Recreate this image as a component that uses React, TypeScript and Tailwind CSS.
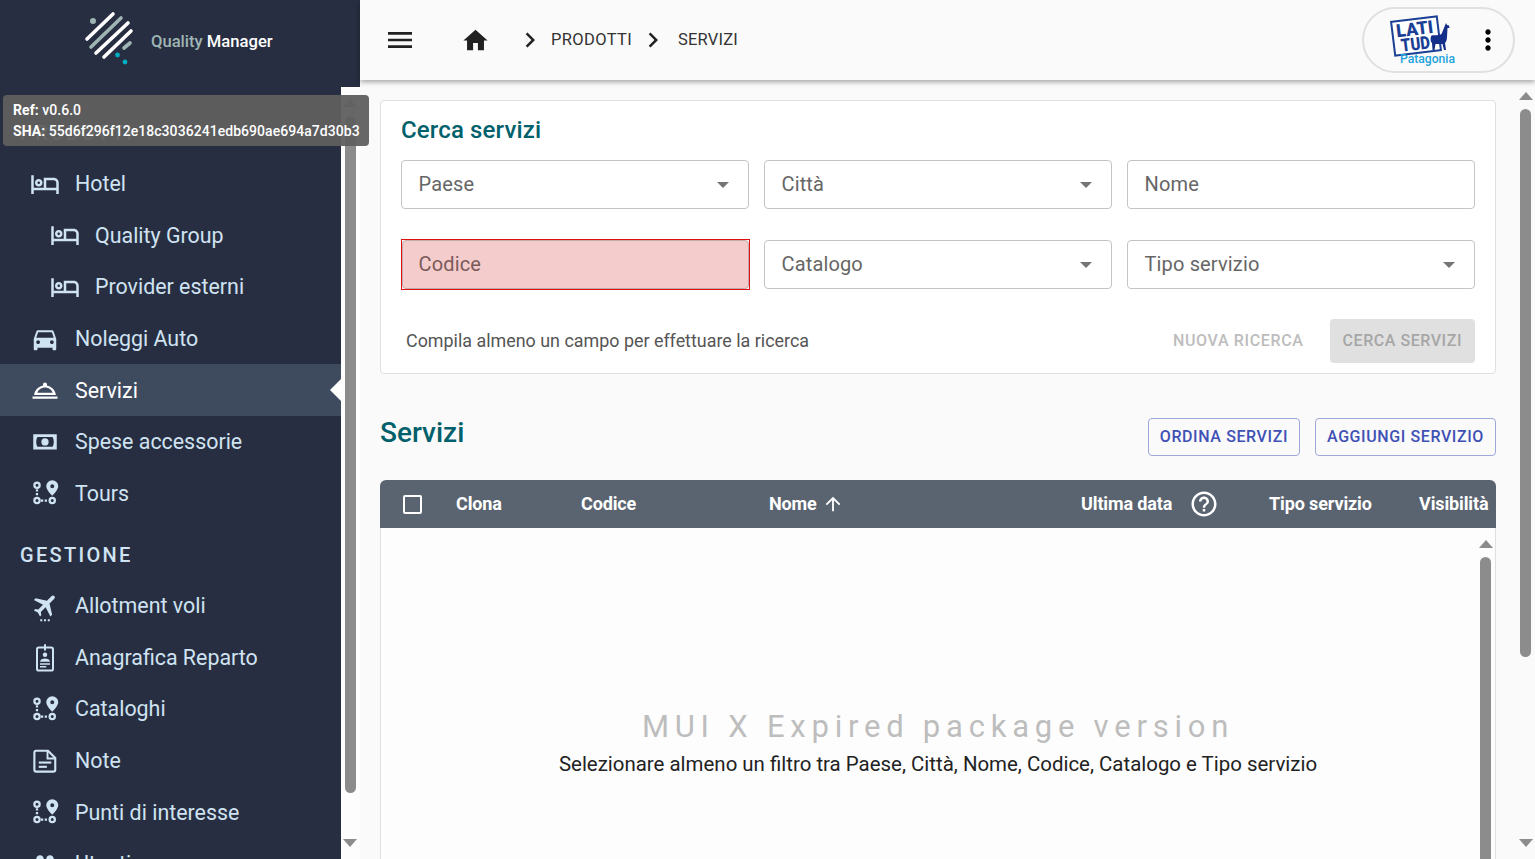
import type { ReactNode } from "react";

const ICON_PATHS = {
  menu: "M3 18h18v-2H3v2zm0-5h18v-2H3v2zm0-7v2h18V6H3z",
  home: "M10 20v-6h4v6h5v-8h3L12 3 2 12h3v8z",
  next: "M10 6 8.59 7.41 13.17 12l-4.58 4.59L10 18l6-6z",
  more: "M12 8c1.1 0 2-.9 2-2s-.9-2-2-2-2 .9-2 2 .9 2 2 2zm0 2c-1.1 0-2 .9-2 2s.9 2 2 2 2-.9 2-2-.9-2-2-2zm0 6c-1.1 0-2 .9-2 2s.9 2 2 2 2-.9 2-2-.9-2-2-2z",
  help: "M11 18h2v-2h-2v2zm1-16C6.48 2 2 6.48 2 12s4.48 10 10 10 10-4.48 10-10S17.52 2 12 2zm0 18c-4.41 0-8-3.59-8-8s3.59-8 8-8 8 3.59 8 8-3.59 8-8 8zm0-14c-2.21 0-4 1.79-4 4h2c0-1.1.9-2 2-2s2 .9 2 2c0 2-3 1.75-3 5h2c0-2.25 3-2.5 3-5 0-2.21-1.79-4-4-4z",
  arrowUp: "M4 12l1.41 1.41L11 7.83V20h2V7.83l5.58 5.59L20 12l-8-8-8 8z",
};

function Glyph({ d, size, className }: { d: string; size: number; className?: string }) {
  return (
    <svg viewBox="0 0 24 24" width={size} height={size} fill="currentColor" className={className}>
      <path d={d} />
    </svg>
  );
}

function Icon({ children }: { children: ReactNode }) {
  return (
    <svg viewBox="0 0 24 24" width={30} height={30} fill="currentColor" className="shrink-0 overflow-visible">
      {children}
    </svg>
  );
}

function HotelIcon() {
  return (
    <Icon>
      <path d="M7 14c1.66 0 3-1.34 3-3S8.66 8 7 8s-3 1.34-3 3 1.34 3 3 3zm0-4c.55 0 1 .45 1 1s-.45 1-1 1-1-.45-1-1 .45-1 1-1zm12-3h-8v8H3V5H1v15h2v-3h18v3h2v-9c0-2.21-1.79-4-4-4zm2 8h-8V9h6c1.1 0 2 .9 2 2v4z" />
    </Icon>
  );
}

function CarIcon() {
  return (
    <Icon>
      <path d="M18.92 6.01C18.72 5.42 18.16 5 17.5 5h-11c-.66 0-1.21.42-1.42 1.01L3 12v8c0 .55.45 1 1 1h1c.55 0 1-.45 1-1v-1h12v1c0 .55.45 1 1 1h1c.55 0 1-.45 1-1v-8l-2.08-5.99zM6.5 16c-.83 0-1.5-.67-1.5-1.5S5.67 13 6.5 13s1.5.67 1.5 1.5S7.33 16 6.5 16zm11 0c-.83 0-1.5-.67-1.5-1.5s.67-1.5 1.5-1.5 1.5.67 1.5 1.5-.67 1.5-1.5 1.5zM5 11l1.5-4.5h11L19 11H5z" />
    </Icon>
  );
}

function ServiceIcon() {
  return (
    <Icon>
      <path d="M2 17.2h20v1.8H2z" />
      <path
        fillRule="evenodd"
        d="M13.4 8.3c.1-.2.2-.5.2-.8 0-.9-.7-1.6-1.6-1.6s-1.6.7-1.6 1.6c0 .3.1.6.2.8C6.7 9.1 3.6 12 3.3 16h17.4c-.3-4-3.4-6.9-7.3-7.7zM12 10c2.8 0 5.3 1.7 6.2 4.2H5.8C6.7 11.7 9.2 10 12 10z"
      />
    </Icon>
  );
}

function MoneyIcon() {
  return (
    <Icon>
      <path
        fillRule="evenodd"
        d="M2.6 5.8h18.8v12.2H2.6zM6 8c-.6.8-1 2.4-1 3.9s.4 3.1 1 3.9h12c.6-.8 1-2.4 1-3.9s-.4-3.1-1-3.9zM12 9a2.9 2.9 0 1 1 0 5.8A2.9 2.9 0 0 1 12 9z"
      />
    </Icon>
  );
}

function RouteIcon() {
  return (
    <Icon>
      <g fill="none" stroke="currentColor" strokeWidth="1.8">
        <circle cx="5.6" cy="5.8" r="2.1" />
        <circle cx="5.6" cy="18" r="2.1" />
        <circle cx="17.8" cy="18" r="2.1" />
        <path d="M5.6 9v6" strokeDasharray="1.8 1.2" />
        <path d="M8.8 18h6" strokeDasharray="1.8 1.2" />
      </g>
      <path
        fillRule="evenodd"
        d="M17.8 1.8a4.8 4.8 0 0 1 4.8 4.8c0 3-4.8 7.6-4.8 7.6S13 9.6 13 6.6a4.8 4.8 0 0 1 4.8-4.8zm0 3.2a1.6 1.6 0 1 0 0 3.2 1.6 1.6 0 0 0 0-3.2z"
      />
    </Icon>
  );
}

function PlaneIcon() {
  return (
    <Icon>
      <g transform="translate(0.5 -1) rotate(45 12 12) translate(12 12) scale(0.98) translate(-11.5 -12)">
        <path d="M21 16v-2l-8-5V3.5c0-.83-.67-1.5-1.5-1.5S10 2.67 10 3.5V9l-8 5v2l8-2.5V19l-2 1.5V22l3.5-1 3.5 1v-1.5L13 19v-5.5l8 2.5z" />
      </g>
      <rect x="8.2" y="22.6" width="1.6" height="1.6" />
      <rect x="11.2" y="22.6" width="1.6" height="1.6" />
      <rect x="14.2" y="22.6" width="1.6" height="1.6" />
    </Icon>
  );
}

function BadgeIcon() {
  return (
    <Icon>
      <rect x="5.6" y="3.6" width="12.8" height="18.4" rx="1.5" fill="none" stroke="currentColor" strokeWidth="1.6" />
      <rect x="11.2" y="1" width="1.6" height="5" />
      <circle cx="12" cy="9.4" r="1.8" />
      <path d="M8 15c0-1.8 2-2.7 4-2.7s4 .9 4 2.7z" />
      <rect x="8" y="16.2" width="8" height="1.2" />
      <rect x="8" y="18.4" width="5" height="1.2" />
    </Icon>
  );
}

function NoteIcon() {
  return (
    <Icon>
      <path
        d="M5 3.8h9.4L20.2 9.6V19a1.5 1.5 0 0 1-1.5 1.5H5A1.5 1.5 0 0 1 3.5 19V5.3A1.5 1.5 0 0 1 5 3.8z"
        fill="none"
        stroke="currentColor"
        strokeWidth="1.7"
      />
      <path d="M14 4v6h6" fill="none" stroke="currentColor" strokeWidth="1.5" />
      <rect x="7" y="12.4" width="10" height="1.7" />
      <rect x="7" y="15.8" width="6.5" height="1.7" />
    </Icon>
  );
}

function GroupIcon() {
  return (
    <Icon>
      <path d="M16 11c1.66 0 2.99-1.34 2.99-3S17.66 5 16 5c-1.66 0-3 1.34-3 3s1.34 3 3 3zm-8 0c1.66 0 2.99-1.34 2.99-3S9.66 5 8 5C6.34 5 5 6.34 5 8s1.34 3 3 3zm0 2c-2.33 0-7 1.17-7 3.5V19h14v-2.5c0-2.33-4.67-3.5-7-3.5zm8 0c-.29 0-.62.02-.97.05 1.16.84 1.97 1.97 1.97 3.45V19h6v-2.5c0-2.33-4.67-3.5-7-3.5z" />
    </Icon>
  );
}

function NavItem({
  label,
  icon,
  nested,
  active,
}: {
  label: string;
  icon: ReactNode;
  nested?: boolean;
  active?: boolean;
}) {
  return (
    <div
      className={`relative flex h-[51.6px] items-center gap-[15px] text-[21.4px] ${nested ? "pl-[50px]" : "pl-[30px]"} ${
        active ? "bg-[#3e4a5e] text-white" : "text-[#cfe3f2]"
      }`}
    >
      {icon}
      <span className="whitespace-nowrap pt-[0.8px]">{label}</span>
      {active && (
        <span className="absolute right-0 top-1/2 h-0 w-0 -translate-y-1/2 border-y-[11px] border-r-[11px] border-y-transparent border-r-white" />
      )}
    </div>
  );
}

function SectionLabel({ children }: { children: ReactNode }) {
  return (
    <div className="flex h-[61px] items-center pl-[20px] pt-[11px] text-[20px] font-medium tracking-[2.3px] text-[#cfe3f2]">
      {children}
    </div>
  );
}

function Scrollbar({ thumb, className }: { thumb: string; className: string }) {
  return (
    <div className={`flex shrink-0 flex-col items-center ${className}`}>
      <svg viewBox="0 0 14 8" width={14} height={8} className="mt-[12px] shrink-0 fill-[#8c8c8c]">
        <path d="M7 0l7 8H0z" />
      </svg>
      <div className={`mt-[9px] w-[11px] shrink-0 rounded-full bg-[#8c8c8c] ${thumb}`} />
      <div className="flex-1" />
      <svg viewBox="0 0 14 8" width={14} height={8} className="mb-[12px] shrink-0 fill-[#8c8c8c]">
        <path d="M7 8l7-8H0z" />
      </svg>
    </div>
  );
}

function Logo() {
  return (
    <svg viewBox="80 5 60 65" width={60} height={65} className="shrink-0" strokeLinecap="round" strokeWidth="3.6">
      <line x1="87" y1="39" x2="113" y2="14" stroke="#fff" />
      <line x1="91" y1="47" x2="121" y2="18" stroke="#9fb5b3" />
      <line x1="96" y1="53" x2="128" y2="23" stroke="#fff" />
      <line x1="104" y1="57" x2="131" y2="31" stroke="#fff" />
      <line x1="124" y1="48" x2="130" y2="43" stroke="#9fb5b3" />
      <circle cx="93" cy="21" r="3" fill="#9fb5b3" />
      <circle cx="117.5" cy="55" r="2.4" fill="#00acc1" />
      <circle cx="125" cy="62" r="2.4" fill="#00acc1" />
    </svg>
  );
}

function LatitudLogo() {
  return (
    <svg viewBox="0 -1 66 56" width={66} height={56} className="shrink-0 overflow-visible">
      <g transform="rotate(-7 25 23)" fill="#1b3f94" fontFamily="Roboto, sans-serif" fontWeight="900">
        <rect x="2" y="6" width="46" height="34" fill="#fff" stroke="#1b3f94" strokeWidth="2" />
        <text x="6" y="22" fontSize="18" textLength="37" lengthAdjust="spacingAndGlyphs">
          LATI
        </text>
        <text x="9" y="37" fontSize="18" textLength="29" lengthAdjust="spacingAndGlyphs">
          TUD
        </text>
      </g>
      <path
        d="M55 10l1 2 2 .5.5 2.5h-2l-.5 9c0 3-1 5-2 6l1 7h-2l-1.500-6h-7l-1 6h-2l-.5-7c-1.500-1-2-5-.5-7.500 3-.5 8 0 10-1.500z"
        fill="#142f8a"
      />
      <text
        x="9"
        y="49.5"
        fontFamily="Roboto, sans-serif"
        fontWeight="500"
        fontSize="13"
        textLength="55"
        lengthAdjust="spacingAndGlyphs"
        fill="#1ea3dc"
      >
        Patagonia
      </text>
    </svg>
  );
}

function Field({ label, select }: { label: string; select?: boolean }) {
  return (
    <div className="flex h-[49px] items-center justify-between rounded-[4px] border border-[#c4c4c4] bg-white pb-[2px] pl-[16.5px] pr-[19px] text-[20px] tracking-[0.15px] text-[#666]">
      <span>{label}</span>
      {select && (
        <svg viewBox="0 0 12 6" width={12} height={6} className="mt-[2px] fill-[#757575]">
          <path d="M0 0l6 6 6-6z" />
        </svg>
      )}
    </div>
  );
}

function ErrorField({ label }: { label: string }) {
  return (
    <div className="-mt-[1px] h-[51px] w-[349px] border border-[#dd1111]">
      <div className="flex h-full items-center rounded-[4px] border border-[#c4aaaa] bg-[#f4cccc] pb-[2px] pl-[15.5px] text-[20px] tracking-[0.15px] text-[#7a5a5a]">
        {label}
      </div>
    </div>
  );
}

function OutlineButton({ children }: { children: ReactNode }) {
  return (
    <button
      type="button"
      className="flex h-[38px] items-center rounded-[4px] border border-[#9fa8da] px-[11px] text-[16px] font-medium tracking-[0.6px] text-[#3f51b5]"
    >
      {children}
    </button>
  );
}

export default function App() {
  return (
    <div className="flex h-[859px] overflow-hidden bg-[#fafafa] font-['Roboto',sans-serif]">
      {/* sidebar */}
      <aside className="relative flex w-[360px] shrink-0 flex-col">
        <div className="flex h-[87px] shrink-0 bg-[#282e41] pl-[80px] pt-[5px]">
          <Logo />
          <div className="ml-[11px] mt-[26px] whitespace-nowrap text-[16.6px] font-medium leading-[22px] text-white">
            <span className="text-[#9fb5b3]">Quality</span> Manager
          </div>
        </div>
        <div className="flex min-h-0 flex-1">
          <nav className="w-[341px] shrink-0 overflow-hidden bg-[#282e41] pt-[10px]">
            <SectionLabel>PRODOTTI</SectionLabel>
            <NavItem label="Hotel" icon={<HotelIcon />} />
            <NavItem label="Quality Group" icon={<HotelIcon />} nested />
            <NavItem label="Provider esterni" icon={<HotelIcon />} nested />
            <NavItem label="Noleggi Auto" icon={<CarIcon />} />
            <NavItem label="Servizi" icon={<ServiceIcon />} active />
            <NavItem label="Spese accessorie" icon={<MoneyIcon />} />
            <NavItem label="Tours" icon={<RouteIcon />} />
            <SectionLabel>GESTIONE</SectionLabel>
            <NavItem label="Allotment voli" icon={<PlaneIcon />} />
            <NavItem label="Anagrafica Reparto" icon={<BadgeIcon />} />
            <NavItem label="Cataloghi" icon={<RouteIcon />} />
            <NavItem label="Note" icon={<NoteIcon />} />
            <NavItem label="Punti di interesse" icon={<RouteIcon />} />
            <NavItem label="Utenti" icon={<GroupIcon />} />
          </nav>
          <Scrollbar thumb="h-[677px]" className="w-[19px] bg-[#fdfdfd] pr-[1px]" />
        </div>
        <div className="absolute left-[3px] top-[95px] z-20 h-[51px] w-[366px] rounded-[4px] bg-[#5f5f5f]/95 pl-[10px] pt-[5px] text-[14px] font-medium leading-[21px] tracking-[0.05px] text-white">
          <div>
            <b className="font-bold">Ref:</b> v0.6.0
          </div>
          <div className="whitespace-nowrap">
            <b className="font-bold">SHA:</b> 55d6f296f12e18c3036241edb690ae694a7d30b3
          </div>
        </div>
      </aside>

      {/* main column */}
      <div className="flex min-w-0 flex-1 flex-col">
        <header className="relative z-10 flex h-[80px] shrink-0 items-center bg-[#fafafa] pl-[24px] text-[#212121] shadow-[0_2px_5px_rgba(0,0,0,0.35)]">
          <Glyph d={ICON_PATHS.menu} size={32} />
          <Glyph d={ICON_PATHS.home} size={29} className="ml-[45px]" />
          <Glyph d={ICON_PATHS.next} size={30} className="ml-[25px]" />
          <span className="ml-[6px] text-[16.5px] tracking-[0.35px] text-[#333]">PRODOTTI</span>
          <Glyph d={ICON_PATHS.next} size={30} className="ml-[6px]" />
          <span className="ml-[10px] text-[16.5px] tracking-[0.2px] text-[#333]">SERVIZI</span>
          <div className="ml-auto mr-[20px] flex h-[66px] w-[153px] items-center rounded-full border-2 border-[#e0e0e0] pl-[27px]">
            <LatitudLogo />
            <Glyph d={ICON_PATHS.more} size={32} className="ml-[15px] text-black" />
          </div>
        </header>

        <div className="flex min-h-0 flex-1">
          <main className="w-[1156px] shrink-0 pl-[20px] pr-[20px] pt-[20px]">
            <section className="h-[274px] rounded-[4px] border border-[#e0e0e0] bg-white px-[20px]">
              <h2 className="mt-[13px] text-[24px] font-medium leading-[32px] tracking-[0.15px] text-[#00606b]">Cerca servizi</h2>
              <div className="mt-[14px] grid grid-cols-3 gap-x-[15px] gap-y-[31px]">
                <Field label="Paese" select />
                <Field label="Città" select />
                <Field label="Nome" />
                <ErrorField label="Codice" />
                <Field label="Catalogo" select />
                <Field label="Tipo servizio" select />
              </div>
              <div className="mt-[29px] flex items-center">
                <span className="ml-[5px] text-[17.9px] text-[#555]">Compila almeno un campo per effettuare la ricerca</span>
                <span className="ml-auto text-[16px] font-medium tracking-[0.65px] text-[#bdbdbd]">NUOVA RICERCA</span>
                <button
                  type="button"
                  className="ml-[26px] flex h-[44px] items-center rounded-[4px] bg-[#e0e0e0] px-[13px] text-[16px] font-medium tracking-[0.55px] text-[#a6a6a6]"
                >
                  CERCA SERVIZI
                </button>
              </div>
            </section>

            <div className="mt-[44px] flex items-start justify-between">
              <h2 className="-mt-[4px] text-[28px] font-medium leading-[38px] text-[#00606b]">Servizi</h2>
              <div className="flex gap-[15px]">
                <OutlineButton>ORDINA SERVIZI</OutlineButton>
                <OutlineButton>AGGIUNGI SERVIZIO</OutlineButton>
              </div>
            </div>

            <div className="mt-[24px]">
              <div className="grid h-[48px] grid-cols-[76px_125px_188px_312px_188px_150px_77px] items-center rounded-t-[6px] bg-[#5a6470] pb-[2px] text-[18px] font-bold tracking-[-0.12px] text-white">
                <span className="ml-[23px] mt-[2px] h-[19px] w-[19px] rounded-[2px] border-2 border-white" />
                <span>Clona</span>
                <span>Codice</span>
                <span className="flex items-center gap-[5px]">
                  Nome
                  <Glyph d={ICON_PATHS.arrowUp} size={22} className="mt-[2px]" />
                </span>
                <span className="flex items-center gap-[17px]">
                  Ultima data
                  <Glyph d={ICON_PATHS.help} size={30} className="mt-[2px]" />
                </span>
                <span>Tipo servizio</span>
                <span>Visibilità</span>
              </div>
              <div className="flex h-[400px] border-x border-[#e0e0e0] bg-[#fdfdfd]">
                <div className="flex-1 pl-[19px] pt-[180px] text-center">
                  <div className="text-[31px] leading-[38px] tracking-[5.77px] text-[#bdbdbd]">MUI X Expired package version</div>
                  <div className="mt-[3px] text-[20.45px] leading-[30px] text-[#222]">
                    Selezionare almeno un filtro tra Paese, Città, Nome, Codice, Catalogo e Tipo servizio
                  </div>
                </div>
                <div className="w-[19px] shrink-0">
                  <Scrollbar thumb="h-[400px]" className="h-full" />
                </div>
              </div>
            </div>
          </main>
          <Scrollbar thumb="h-[548px]" className="w-[19px]" />
        </div>
      </div>
    </div>
  );
}
